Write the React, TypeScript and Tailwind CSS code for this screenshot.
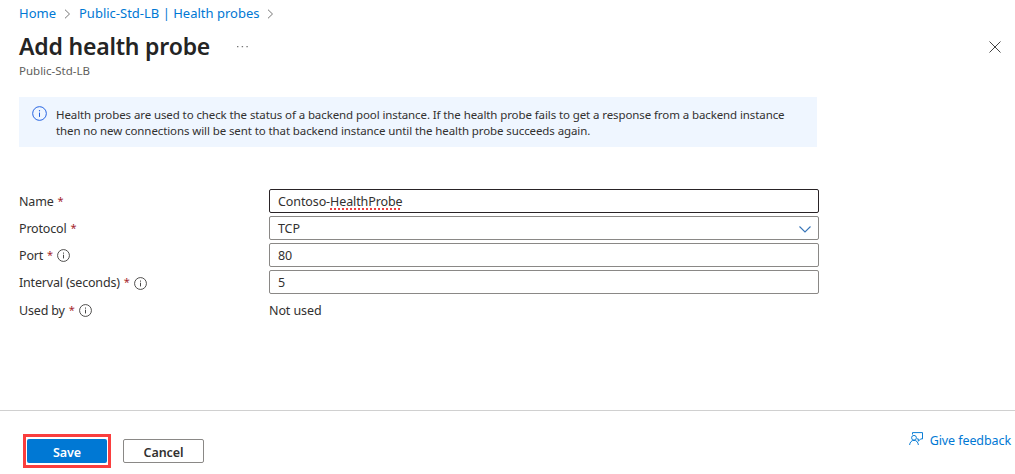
import type { ReactNode } from "react";

function InfoIcon({ className, size }: { className: string; size: number }) {
  return (
    <svg width={size} height={size} viewBox="0 0 16 16" fill="none" className={className}>
      <circle cx="8" cy="8" r="7.3" stroke="currentColor" strokeWidth="1.05" />
      <path d="M8 7v4.6" stroke="currentColor" strokeWidth="1.1" />
      <path d="M8 4.4v1.3" stroke="currentColor" strokeWidth="1.2" />
    </svg>
  );
}

function Crumb() {
  return (
    <svg width="7" height="10" viewBox="0 0 7 10" fill="none" className="mt-[2px] shrink-0 text-[#767676]">
      <path d="M1 0.7 5.5 5 1 9.3" stroke="currentColor" />
    </svg>
  );
}

function Row({ label, info, children }: { label: ReactNode; info?: string; children: ReactNode }) {
  return (
    <div className="flex h-6 items-center">
      <div className="flex w-[250px] items-center whitespace-nowrap">
        <span className="pt-[2px] tracking-[-0.18px]">{label}</span>
        <span className="ml-1 text-[11px] text-[#a4262c]">*</span>
        {info && <InfoIcon size={13} className={info} />}
      </div>
      {children}
    </div>
  );
}

const field = "flex h-6 w-[550px] items-center rounded-[2px] border bg-white pl-2 pt-[2px]";

export default function App() {
  return (
    <div className="flex h-[474px] w-[1015px] flex-col overflow-hidden bg-white font-['Noto_Sans','Open_Sans',sans-serif] text-[12.5px] leading-[18px] tracking-[-0.1px] text-[#323130]">
      <nav className="flex h-[27px] items-center pb-[2px] pl-[19px] text-[13px] tracking-normal text-[#0078d4]">
        <span className="w-[45px]">Home</span>
        <Crumb />
        <span className="ml-2 w-[188px] whitespace-nowrap">Public-Std-LB | Health probes</span>
        <Crumb />
      </nav>
      <header className="flex h-[70px] justify-between pl-[19px] pr-[14px]">
        <div>
          <div className="flex h-[36px] items-center pt-px">
            <h1 className="w-[217px] whitespace-nowrap text-[23px] font-semibold leading-8 tracking-[-0.2px] text-[#242424]">Add health probe</h1>
            <svg width="13" height="3" viewBox="0 0 13 3" fill="#777" className="mt-px">
              <path d="M1 1h1.4v1.3H1zM5.7 1h1.4v1.3H5.7zM10.4 1h1.4v1.3h-1.4z" />
            </svg>
          </div>
          <p className="text-[11.5px] leading-4 tracking-normal text-[#605e5c]">Public-Std-LB</p>
        </div>
        <svg width="12" height="12" viewBox="0 0 12 12" fill="none" className="mt-[14px]">
          <path d="m0.5 0.5 11 11m0-11-11 11" stroke="#444" strokeWidth="1" />
        </svg>
      </header>
      <section className="ml-[19px] flex h-[50px] w-[798px] bg-[#eff6ff] pl-[13px] pt-[9px]">
        <InfoIcon size={15} className="shrink-0 text-[#2160e0]" />
        <p className="ml-[9px] mt-px whitespace-nowrap text-[11.5px] leading-4 tracking-[-0.1px] text-[#323130]">
          <span className="block">Health probes are used to check the status of a backend pool instance. If the health probe fails to get a response from a backend instance</span>
          <span className="block">then no new connections will be sent to that backend instance until the health probe succeeds again.</span>
        </p>
      </section>
      <main className="flex h-[263px] flex-col gap-[3px] pl-[19px] pt-[42px]">
        <Row label="Name">
          <div className={`${field} border-[#292326]`}>
            Contoso-<span className="underline decoration-[#f04040] decoration-dotted decoration-[1.5px] underline-offset-[2px] [text-decoration-skip-ink:none]">HealthProbe</span>
          </div>
        </Row>
        <Row label="Protocol">
          <div className={`${field} justify-between border-[#8a8886] pr-[7px]`}>
            TCP
            <svg width="12" height="7" viewBox="0 0 12 7" fill="none">
              <path d="m0.5 0.5 5.5 5.5 5.5-5.5" stroke="#3875b8" strokeWidth="1.1" />
            </svg>
          </div>
        </Row>
        <Row label="Port" info="ml-1 mt-px">
          <div className={`${field} border-[#8a8886]`}>80</div>
        </Row>
        <Row label="Interval (seconds)" info="ml-1 mt-[3px]">
          <div className={`${field} border-[#8a8886]`}>5</div>
        </Row>
        <div className="pt-px">
          <Row label="Used by" info="ml-1 mt-px">
            <span className="pt-[2px]">Not used</span>
          </Row>
        </div>
      </main>
      <footer className="flex h-[64px] justify-between border-t border-[#d0d0d0] pl-[23px] pr-[4px]">
        <div className="flex pt-[23px]">
          <div className="h-[34px] w-[88px] border-[3px] border-[#fa3e3e] p-px">
            <button className="mt-px h-6 w-20 rounded-[2px] bg-[#0078d4] pt-[4px] font-semibold text-white">Save</button>
          </div>
          <button className="ml-3 mt-[5px] h-6 w-[81px] rounded-[2px] border border-[#8a8886] pt-[4px] font-semibold">Cancel</button>
        </div>
        <div className="mt-[21px] flex h-[18px] text-[#0078d4]">
          <svg width="14" height="14" viewBox="0 0 14 14" fill="none" stroke="currentColor" strokeWidth="0.95" className="mr-[7px]">
            <path d="M3.500 2.500V.6h10v6.300h-1.800L9.300 9.300V6.900H8" />
            <circle cx="5" cy="5.800" r="2.400" />
            <path d="M.6 13c.3-2.800 2-4.700 4.400-4.700S9.100 10.200 9.400 13" />
          </svg>
          <span className="whitespace-nowrap tracking-[-0.09px]">Give feedback</span>
        </div>
      </footer>
    </div>
  );
}
